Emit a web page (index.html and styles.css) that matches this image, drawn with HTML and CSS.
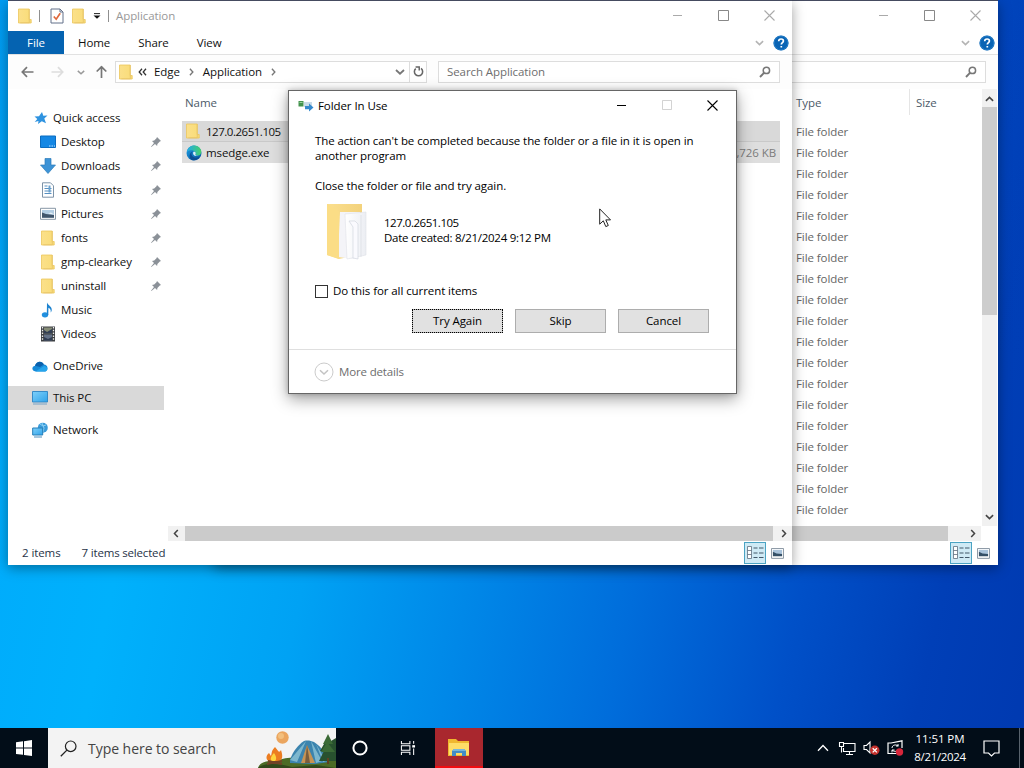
FILE: index.html
```html
<!DOCTYPE html>
<html lang="en">
<head>
<meta charset="utf-8">
<title>Application</title>
<link rel="stylesheet" href="styles.css">
</head>
<body>
<svg class="defs" aria-hidden="true">
  <defs>
    <linearGradient id="gFold" x1="0" x2="1"><stop offset="0" stop-color="#fbe08a"/><stop offset="1" stop-color="#f9dc78"/></linearGradient>
    <linearGradient id="gBack" x1="0" x2="1"><stop offset="0" stop-color="#fbdf8e"/><stop offset="1" stop-color="#f3d27c"/></linearGradient>
    <linearGradient id="gPage" x1="0" x2="1"><stop offset="0" stop-color="#fff"/><stop offset="1" stop-color="#eceef3"/></linearGradient>
    <linearGradient id="gScreen" x1="0" x2="1" y2="1"><stop offset="0" stop-color="#7fd0fa"/><stop offset="1" stop-color="#2fa3ea"/></linearGradient>
    <linearGradient id="gEdge" x1="0" x2="1" y2="1"><stop offset="0" stop-color="#1b9de2"/><stop offset="1" stop-color="#0b55a0"/></linearGradient>
    <linearGradient id="gEdge2" x1="0" x2="1"><stop offset="0" stop-color="#22a9e8"/><stop offset="1" stop-color="#45d06a"/></linearGradient>
  </defs>
  <symbol id="folder" viewBox="0 0 14 16"><path d="M.5 1h10.700v10.500h2V15H.5z" fill="url(#gFold)" stroke="#ecc75c" stroke-width=".8"/><path d="M11.300 1v13.800h-9" fill="none" stroke="#e6c469" stroke-width=".8"/></symbol>
  <symbol id="props" viewBox="0 0 14 16"><path d="M1 1h9l3 3v11H1z" fill="#fff" stroke="#62718a"/><path d="M10 1v3h3" fill="none" stroke="#62718a"/><path d="M3.800 8.500l2.400 2.700 4-6" fill="none" stroke="#e0683c" stroke-width="1.700"/></symbol>
  <symbol id="chev" viewBox="0 0 10 6"><path d="M1 1l4 3.700L9 1" fill="none" stroke="currentColor" stroke-width="1.800"/></symbol>
  <symbol id="chevR" viewBox="0 0 6 10"><path d="M1 1l3.700 4L1 9" fill="none" stroke="currentColor" stroke-width="1.700"/></symbol>
  <symbol id="arrow" viewBox="0 0 13 12"><path d="M12.500 6H1.500M6 1.200L1.300 6 6 10.800" fill="none" stroke="currentColor" stroke-width="1.700"/></symbol>
  <symbol id="mag" viewBox="0 0 12 12"><circle cx="7.400" cy="4.400" r="3.200" fill="none" stroke="currentColor" stroke-width="1.500"/><path d="M5 6.800L1 11" stroke="currentColor" stroke-width="1.900"/></symbol>
  <symbol id="help" viewBox="0 0 16 16"><circle cx="8" cy="8" r="7.600" fill="#0a64b4"/><circle cx="8" cy="8" r="6.900" fill="none" stroke="#2f86cf" stroke-width=".7"/><path d="M5.700 6.200C5.700 4.700 6.700 4 8.100 4c1.400 0 2.300.8 2.300 2 0 1.700-2.100 1.700-2.100 3.600M8.300 11v1.600" fill="none" stroke="#fff" stroke-width="1.700"/></symbol>
  <symbol id="min" viewBox="0 0 11 11"><path d="M1 5.500h9" stroke="currentColor"/></symbol>
  <symbol id="max" viewBox="0 0 11 11"><path d="M.5.500h10v10H.5z" fill="none" stroke="currentColor"/></symbol>
  <symbol id="close" viewBox="0 0 11 11"><path d="M.5.500l10 10M10.500.500l-10 10" stroke="currentColor" stroke-width="1.100"/></symbol>
  <symbol id="pin" viewBox="0 0 12 12"><path d="M7 1l4 4-1.200.5-2.400 2.400-.3 2.200L5 8l-3.600 3L1 10.700 4 7 2 5l2.200-.4L6.500 2.200z" fill="#8b9198"/></symbol>
  <symbol id="details" viewBox="0 0 17 14"><path d="M.5.500h4v12h-4zM.5 4.500h4M.5 8.500h4" fill="#fff" stroke="#5f6f7f" stroke-width=".8"/><path d="M6.500 2h4M12 2h4.500M6.500 7h4M12 7h4.500M6.500 11.500h4M12 11.500h4.500" stroke="#43586a" stroke-width="1.100"/></symbol>
  <symbol id="thumbs" viewBox="0 0 14 12"><path d="M.5.500h13v10.800H.5z" fill="#fff" stroke="#7f8d9b"/><path d="M2 2h10v4.500H2z" fill="#a9c3db"/><path d="M2 4l4 2 6 .5V9H2z" fill="#355067"/></symbol>
  <symbol id="pc" viewBox="0 0 16 15"><path d="M.5 1h15v10.500H.5z" fill="url(#gScreen)" stroke="#2b83c4" stroke-width=".9"/><path d="M1 13.500h14" stroke="#7ea7c6" stroke-width="1.100"/></symbol>
</svg>

<main class="desktop">
  <section class="window back">
    <div class="titlebar"><span class="caption-buttons"><svg><use href="#min"/></svg><svg class="dark"><use href="#max"/></svg><svg><use href="#close"/></svg></span></div>
    <div class="tabs"><span class="tab-end"><svg class="chev"><use href="#chev"/></svg><svg class="help"><use href="#help"/></svg></span></div>
    <div class="nav"><div class="search"><svg class="mag"><use href="#mag"/></svg></div></div>
    <div class="back-body">
      <div class="back-list">
        <div class="back-head"><span>Type</span><span>Size</span></div>
        <ul class="types">
          <li>File folder</li><li>File folder</li><li>File folder</li><li>File folder</li><li>File folder</li><li>File folder</li><li>File folder</li><li>File folder</li><li>File folder</li><li>File folder</li><li>File folder</li><li>File folder</li><li>File folder</li><li>File folder</li><li>File folder</li><li>File folder</li><li>File folder</li><li>File folder</li><li>File folder</li>
        </ul>
      </div>
      <div class="vscroll"><svg class="up"><use href="#chev"/></svg><i></i><svg><use href="#chev"/></svg></div>
    </div>
    <div class="hscroll"><i></i><svg><use href="#chevR"/></svg></div>
    <div class="status"><span class="views"><b><svg class="det"><use href="#details"/></svg></b><svg class="thu"><use href="#thumbs"/></svg></span></div>
  </section>

  <section class="window front">
    <div class="titlebar">
      <div class="quick">
        <svg class="fold"><use href="#folder"/></svg><i class="sep"></i>
        <svg class="fold pr"><use href="#props"/></svg><svg class="fold"><use href="#folder"/></svg>
        <svg class="more" viewBox="0 0 8 6"><path d="M1 .6h6" stroke="#222"/><path d="M.5 2.400h7L4 5.800z" fill="#111"/></svg><i class="sep two"></i>
        <span class="title">Application</span>
      </div>
      <span class="caption-buttons"><svg><use href="#min"/></svg><svg class="dark"><use href="#max"/></svg><svg><use href="#close"/></svg></span>
    </div>
    <div class="tabs"><span class="file">File</span><span class="tab home">Home</span><span class="tab share">Share</span><span class="tab view">View</span><span class="tab-end"><svg class="chev"><use href="#chev"/></svg><svg class="help"><use href="#help"/></svg></span></div>
    <div class="nav">
      <svg class="arr"><use href="#arrow"/></svg><svg class="arr fwd"><use href="#arrow"/></svg><svg class="hist"><use href="#chev"/></svg><svg class="arr upw"><use href="#arrow"/></svg>
      <div class="address">
        <svg class="fold"><use href="#folder"/></svg>
        <svg class="dbl" viewBox="0 0 9 8"><path d="M4 .8L1.200 4 4 7.200M8 .8L5.200 4 8 7.200" fill="none" stroke="#333" stroke-width="1.300"/></svg>
        <span class="edge">Edge</span><svg class="cr"><use href="#chevR"/></svg><span class="app">Application</span><svg class="cr"><use href="#chevR"/></svg>
        <svg class="drop"><use href="#chev"/></svg>
        <span class="refresh"><svg viewBox="0 0 12 12"><path d="M3 2.900A4.500 4.500 0 1 0 8.800 2.700" fill="none" stroke="#666" stroke-width="1.700"/><path d="M2.800 1h4v3.800" fill="none" stroke="#666" stroke-width="1.600"/></svg></span>
      </div>
      <div class="search"><span>Search Application</span><svg class="mag"><use href="#mag"/></svg></div>
    </div>
    <div class="body">
      <nav class="tree">
        <div class="item root"><svg viewBox="0 0 14 14"><path d="M8 1l1.300 3.800 4.200-.4-3.200 3 1.700 4.800-4.200-2L4 13l.5-3L.7 11l2.600-3L.5 5.500l4.500-.3z" fill="#2f93e0"/></svg><span class="w-qa">Quick access</span></div>
        <div class="item"><svg viewBox="0 0 16 14"><path d="M.5 1h15v11.500H.5z" fill="#1487e4" stroke="#0b6cc0"/><path d="M9 11h6" stroke="#bfe2ff" stroke-dasharray="1.500 1"/></svg><span>Desktop</span><svg class="pin"><use href="#pin"/></svg></div>
        <div class="item"><svg viewBox="0 0 16 16"><path d="M5 .5h6V7h4.500L8 15.500.5 7H5z" fill="#3d93d6" stroke="#2d7cba" stroke-width=".7"/></svg><span>Downloads</span><svg class="pin"><use href="#pin"/></svg></div>
        <div class="item"><svg viewBox="0 0 16 16"><path d="M2.500.8h8l3 3v11.400h-11z" fill="#fff" stroke="#7d93a8"/><path d="M4.500 4h3M4.500 6.500h7M4.500 9h7M4.500 11.500h7" stroke="#5790c2" stroke-width="1.200"/><path d="M8.500 3.500h2v7h-2z" fill="#6ba2cf"/></svg><span>Documents</span><svg class="pin"><use href="#pin"/></svg></div>
        <div class="item"><svg viewBox="0 0 16 13"><path d="M.5.800h15v11H.5z" fill="#fff" stroke="#8797a5"/><path d="M2 2.500h12v7.800H2z" fill="#b2cde3"/><path d="M2 5l4 1.500 8 1v2.800H2z" fill="#40556b"/><path d="M8 6l3-1 3 2z" fill="#e9f2f8"/></svg><span>Pictures</span><svg class="pin"><use href="#pin"/></svg></div>
        <div class="item"><svg><use href="#folder"/></svg><span>fonts</span><svg class="pin"><use href="#pin"/></svg></div>
        <div class="item"><svg><use href="#folder"/></svg><span>gmp-clearkey</span><svg class="pin"><use href="#pin"/></svg></div>
        <div class="item"><svg><use href="#folder"/></svg><span>uninstall</span><svg class="pin"><use href="#pin"/></svg></div>
        <div class="item"><svg viewBox="0 0 16 16"><ellipse cx="5" cy="12.800" rx="3.200" ry="2.600" fill="#2290df"/><path d="M7 .5c1 3 5.500 4 4.700 8-.1.800-.5 1.400-1 2 .5-3-1-4.300-2.300-4.800L8.300 13H6.800z" fill="#1d83d0"/></svg><span>Music</span></div>
        <div class="item"><svg viewBox="0 0 16 16"><path d="M1 .5h14v15H1z" fill="#3c3f43"/><path d="M4 1.500h8v6H4z" fill="#858b76"/><path d="M4 8.500h8v6H4z" fill="#647289"/><path d="M4 4l3 2 5-3v4.500H4zM4 11l4 2 4-2v3.500H4z" fill="#303d53"/><path d="M2.500 1v14M13.500 1v14" stroke="#eee" stroke-width="1.300" stroke-dasharray="1.500 1.300"/></svg><span>Videos</span></div>
        <div class="item root gap"><svg viewBox="0 0 16 14"><path d="M3.500 12.500C-.5 12-.6 7.500 3 6.800 4.500 2 10 1.300 11.800 5.600c4-.2 5.300 5.500 1.500 6.900z" fill="#168ad8"/><path d="M3 6.800C4.500 2 10 1.300 11.800 5.600L8 8z" fill="#0b61ad"/><path d="M3.500 12.500L12 7c4 .5 4.500 4.500 1.300 5.500z" fill="#26a5ec"/></svg><span>OneDrive</span></div>
        <div class="item root gap sel"><svg><use href="#pc"/></svg><span>This PC</span></div>
        <div class="item root gap"><svg viewBox="0 0 16 16"><circle cx="10.800" cy="5.700" r="5" fill="#3b9bd9"/><path d="M8 2l3 2 3-1M10 1l2 5-1 4" stroke="#8bd0f5" fill="none"/><path d="M.7 6h10v7h-10z" fill="url(#gScreen)" stroke="#267eb8"/><path d="M2 15h8" stroke="#6da2c9" stroke-width="1.200"/></svg><span>Network</span></div>
      </nav>
      <div class="pane">
        <div class="files">
          <div class="head">Name</div>
          <div class="row"><svg class="fi"><use href="#folder"/></svg><span class="ver">127.0.2651.105</span></div>
          <div class="row"><svg class="eg" viewBox="0 0 16 16"><circle cx="8" cy="8" r="7.500" fill="url(#gEdge)"/><path d="M.8 7C2 1.500 7-.8 11.500 1.300c4 2 5 6.700 2.300 8.700-1.700 1.100-4.500.7-4.300-1C10.500 6 4.800 3.200.8 7z" fill="url(#gEdge2)"/><path d="M6.800 6.200c-3 2.300-.7 7.300 4.700 6.300 1.200-.2 2-.8 2.400-1-1.700 3-5.200 4.300-8 3.500C2.500 13.500 3 7.500 6.800 6.200z" fill="#0c4d93"/><path d="M7.500 6.700c2.400-.5 2.500 1.800 1.900 2.700-.2 1.300 1.600 1.500 2.600 1.300-3 1.600-6-1.800-4.500-4z" fill="#dff1fa"/></svg><span>msedge.exe</span><span class="size">3,726 KB</span></div>
        </div>
        <div class="hscroll"><svg class="l"><use href="#chevR"/></svg><i></i><svg><use href="#chevR"/></svg></div>
      </div>
    </div>
    <div class="status"><span>2 items</span><span class="selcount">7 items selected</span><span class="views"><b><svg class="det"><use href="#details"/></svg></b><svg class="thu"><use href="#thumbs"/></svg></span></div>
  </section>

  <section class="dialog">
    <div class="dlg-title"><svg class="dicon" viewBox="0 0 16 12"><path d="M.5 1h5v5.500h-5z" fill="#43924d"/><path d="M1.500 2.500h3" stroke="#9bd09c"/><path d="M6 2h8v5H6z" fill="#c9dbe8"/><path d="M7 6h4V3.600L15.500 7.600 11 11.600V9.300H7z" fill="#3589cd"/></svg><span>Folder In Use</span><span class="dlg-caps"><svg class="k"><use href="#min"/></svg><svg class="dis"><use href="#max"/></svg><svg class="k x"><use href="#close"/></svg></span></div>
    <div class="dlg-body">
      <p class="msg">The action can't be completed because the folder or a file in it is open in<br>another program</p>
      <p class="msg second">Close the folder or file and try again.</p>
      <div class="what">
        <svg viewBox="0 0 46 58"><path d="M4 2h35v50L16 57 4 53z" fill="url(#gBack)"/><path d="M17 10h20v44l-7 3-15-2z" fill="#f4f4f8"/><path d="M22 12l21-2v43l-19 4z" fill="url(#gPage)" stroke="#dfe1e7" stroke-width=".6"/><path d="M26 19h6l3 3v35l-5-1V25z" fill="#fafafe" stroke="#d3d7df" stroke-width=".7"/><path d="M38 13v42" stroke="#d9dce3" stroke-width=".7"/><path d="M4 2l12 7v48L4 53z" fill="#fbdd86"/></svg>
        <div><p class="ver">127.0.2651.105</p><p class="date-line">Date created: 8/21/2024 9:12 PM</p></div>
      </div>
      <label class="check"><i></i><span>Do this for all current items</span></label>
      <div class="buttons"><button class="focus">Try Again</button><button>Skip</button><button>Cancel</button></div>
    </div>
    <div class="dlg-foot"><svg viewBox="0 0 20 20"><circle cx="10" cy="10" r="9" fill="#fff" stroke="#cbcbcb"/><path d="M6 8.300l4 3.700 4-3.700" fill="none" stroke="#c3c3c3" stroke-width="1.500"/></svg><span>More details</span></div>
  </section>

  <svg class="cursor" viewBox="0 0 12 20"><path d="M.7.900v15.300l3.600-3.400 2.500 5.800 2.500-1.100-2.500-5.600h4.700z" fill="#fff" stroke="#222" stroke-width="1"/></svg>

  <footer class="taskbar">
    <span class="start"><svg viewBox="0 0 16 16"><path d="M0 2.200l7-.9v6.300H0zM8 1.200L16 0v7.600H8zM0 8.600h7v6.200l-7-.9zM8 8.600h8V16l-8-1.100z" fill="#fff"/></svg></span>
    <div class="tb-search">
      <svg class="m" viewBox="0 0 17 17"><circle cx="10.700" cy="6.300" r="5.300" fill="none" stroke="#222" stroke-width="1.200"/><path d="M6.900 10.100L.8 16.200" stroke="#222" stroke-width="1.300"/></svg>
      <span>Type here to search</span>
      <svg class="art" viewBox="0 0 80 40"><circle cx="26.500" cy="9.500" r="6.200" fill="#eba55e"/><circle cx="25" cy="8" r="3" fill="#f3bf7d"/><path d="M2 40c2-7 12-8 20-7 8-5 28-4 38 0l20-1v8z" fill="#4b6b25"/><path d="M2 40c5-5 20-5 34-1l24-2 20 3z" fill="#31481b"/><path d="M34 32c3-9 8-15 14-19 4-1 7 0 10 1 8 5 11 11 15 20l-14 2-25-1z" fill="#3c84ae"/><path d="M50 13L34 32l7 2zM55 13l5 22 6-2zM60 16l10 17-3 1z" fill="#7db7ce"/><path d="M51 17l-6 18h14z" fill="#c69353"/><path d="M51 17l-2 18h5z" fill="#795d3d"/><path d="M72 9l-8 14h4l-5 10h17V10l-5 3z" fill="#28512f"/><path d="M72 6l-5 10h10zM71 14l-6 10h14z" fill="#3b6a36"/><path d="M72 30v6" stroke="#60401f" stroke-width="2"/><path d="M19 19c4 5 4 6 6 3 2 6 2 10-3 12h-8c-5-2-4-7-1-9l2 3c1-3 0-5 4-9z" fill="#ec7d20"/><path d="M18 25c3 4 3 8-1 9-4-2-2-6 1-9z" fill="#ffd43c"/><path d="M11 36l15-3M12 33l14 3" stroke="#704326" stroke-width="2"/></svg>
    </div>
    <span class="slot"><svg class="cort" viewBox="0 0 16 16"><circle cx="8" cy="8" r="6.600" fill="none" stroke="#fff" stroke-width="2"/></svg></span>
    <span class="slot task"><svg viewBox="0 0 17 16"><path d="M1.500.500v3h9v-3M1.500 15.500v-3h9v3M1.500 5.500h9v5h-9zM14.500.500v3M14.500 8.500v7" fill="none" stroke="#fff" stroke-width="1.100"/><path d="M13 5h3v2.500h-3z" fill="#fff"/></svg></span>
    <span class="exp"><svg viewBox="0 0 22 19"><path d="M0 1h8l2 2h11v15H0z" fill="#f0b72f"/><path d="M1 5h20v12H1z" fill="#ffdc67"/><path d="M4 18v-5l2-2h10l2 2v5h-4v-3H8v3z" fill="#438dc6"/><path d="M6 11h10l2 2H4z" fill="#76b6dc"/></svg></span>
    <div class="tray">
      <svg class="t1" viewBox="0 0 12 8"><path d="M1 6.800L6 1.500l5 5.300" fill="none" stroke="#fff" stroke-width="1.300"/></svg>
      <svg class="t2" viewBox="0 0 17 15"><path d="M5 2.500h11v8H4.500V7M10.500 10.500v3M7 13.500h7M.5 1.500h4v4h-4zM2.500 5.500v6" fill="none" stroke="#fff" stroke-width="1.100"/></svg>
      <svg class="t3" viewBox="0 0 17 16"><path d="M1 5.500h2.500L7 2v11L3.500 9.500H1z" fill="none" stroke="#fff" stroke-width="1.100"/><circle cx="11.800" cy="10.300" r="4.700" fill="#c5312d"/><path d="M9.700 8.200l4.200 4.200M13.900 8.200l-4.200 4.200" stroke="#fff" stroke-width="1.300"/></svg>
      <svg class="t4" viewBox="0 0 17 16"><path d="M15 8V.800L4 3H1v10.500h9" fill="none" stroke="#fff" stroke-width="1.200"/><path d="M5 8c0-3 4-4 6-2V4M11.500 6H9M11 9c0 3-4 3-6 1v2.500M5 10h2.500" fill="none" stroke="#fff"/><circle cx="12.500" cy="12" r="3.700" fill="#d7263b"/></svg>
      <div class="clock"><span>11:51 PM</span><span class="date">8/21/2024</span></div>
      <svg class="t5" viewBox="0 0 17 17"><path d="M1 1h15v12h-4.500l-3 3-3-3H1z" fill="none" stroke="#fff" stroke-width="1.200"/></svg>
      <i class="peek"></i>
    </div>
  </footer>
</main>
</body>
</html>
```
FILE: styles.css
```css
* { box-sizing: border-box; }
body { margin: 0; width: 1024px; height: 768px; overflow: hidden; font-family: "Open Sans", "Noto Sans", sans-serif; font-size: 11.5px; letter-spacing: -.08px; color: #111; }
p, ul { margin: 0; padding: 0; }
li { list-style: none; }
svg { display: block; flex: none; overflow: visible; }
span { white-space: nowrap; }
.defs { position: absolute; width: 0; height: 0; }

.desktop {
  position: relative; width: 1024px; height: 768px; overflow: hidden;
  background:
    linear-gradient(180deg, rgba(0, 50, 170, .1), transparent 50%),
    linear-gradient(102deg, #00a8fb 0%, #00b1fc 20%, #00a2f4 36%, #0088e8 50%, #006ddb 64%, #0050c8 78%, #003fb7 90%, #0039b0 100%);
}

.window { position: absolute; top: 1px; width: 784px; height: 564px; background: #fff; display: flex; flex-direction: column; box-shadow: 0 -1px 0 #454b60, 0 3px 12px rgba(0, 0, 0, .38); }
.front { left: 8px; }
.back { left: 214px; }

.titlebar { height: 30px; display: flex; align-items: center; padding-bottom: 1px; }
.quick { display: flex; align-items: center; padding-left: 10px; }
.fold { width: 14px; height: 16px; }
.sep { width: 1px; height: 12px; background: #8f8f8f; margin: 0 10px 0 7px; }
.pr { margin-right: 8px; }
.more { width: 8px; height: 6px; margin-left: 7px; }
.sep.two { margin: 0 7px 0 7px; }
.title { color: #999; }
.caption-buttons { margin-left: auto; display: flex; gap: 35px; padding-right: 17px; color: #aaa; }
.caption-buttons svg { width: 11px; height: 11px; }
.caption-buttons .dark { color: #888; }

.tabs { height: 24px; display: flex; align-items: center; border-bottom: 1px solid #e2e2e2; }
.file { width: 56px; height: 23px; background: #0563b1; color: #fff; text-align: center; line-height: 24px; }
.tab { line-height: 24px; }
.home { margin-left: 14px; }
.share { margin-left: 28px; }
.view { margin-left: 28px; }
.tab-end { margin-left: auto; display: flex; align-items: center; gap: 9px; padding-right: 3px; }
.tab-end .chev { width: 9px; height: 6px; color: #b4b4b4; }
.tab-end .help { width: 16px; height: 16px; }

.nav { height: 34px; display: flex; align-items: center; background: #fdfdfd; padding-right: 12px; }
.arr { width: 13px; height: 12px; margin-left: 13px; color: #777; }
.arr.fwd { transform: scaleX(-1); color: #ddd; margin-left: 17px; }
.hist { width: 8px; height: 5px; color: #999; margin-left: 13px; }
.arr.upw { transform: rotate(90deg); margin-left: 10px; }
.address { width: 312px; height: 22px; margin-left: 7px; border: 1px solid #ddd; background: #fff; display: flex; align-items: center; padding-left: 3px; }
.address span, .search span { line-height: 18px; padding-bottom: 1px; }
.dbl { width: 9px; height: 8px; margin: 0 7px 0 5px; }
.cr { width: 5px; height: 8px; color: #777; margin: 0 9px 0 9px; }
.drop { width: 10px; height: 6px; color: #777; margin-left: auto; }
.refresh { border-left: 1px solid #ddd; height: 20px; margin-left: 4px; width: 17px; display: flex; align-items: center; justify-content: center; }
.refresh svg { width: 11px; height: 11px; }
.search { width: 342px; height: 22px; margin-left: auto; border: 1px solid #ddd; background: #fff; display: flex; align-items: center; padding: 0 8px; color: #6e6e6e; }
.mag { width: 12px; height: 12px; margin-left: auto; color: #777; }

.body { height: 453px; display: flex; }
.tree { width: 160px; padding-top: 17px; }
.item { height: 24px; display: flex; align-items: center; padding: 0 0 0 32px; width: 156px; }
.item svg { width: 16px; height: 16px; margin-right: 5px; }
.item span { padding-bottom: 2px; }
.item .pin { width: 12px; height: 12px; margin: 0 2px 0 auto; }
.item.root { padding-left: 24px; }
.item.root:first-child svg { width: 14px; height: 14px; margin: 0 5px 0 2px; }
.item.gap { margin-top: 8px; }
.item.sel { background: linear-gradient(#d9d9d9, #d9d9d9) 0 0 / 100% 24px; margin-top: 8px; }

.pane { flex: 1; display: flex; flex-direction: column; }
.files { flex: 1; padding: 0 12px 0 14px; }
.head { height: 32px; line-height: 28px; padding-left: 3px; color: #4c5a68; }
.row { height: 21px; display: flex; align-items: center; background: #d9d9d9; padding: 0 4px; border-bottom: 1px solid #c9c9c9; }
.row + .row { background: #dedede; border-bottom: 0; }
.ver { letter-spacing: -.48px; }
.fi { width: 14px; height: 16px; margin-right: 6px; }
.eg { width: 16px; height: 16px; margin-right: 4px; }
.size { margin-left: auto; color: #7c7c7c; }

.hscroll { height: 15px; display: flex; align-items: center; background: #f1f1f1; color: #444; margin-bottom: 1px; flex: none; }
.hscroll i { height: 15px; background: #cbcbcb; flex: 1; margin: 0 8px; }
.hscroll svg { width: 6px; height: 9px; margin-right: 5px; }
.hscroll svg.l { transform: scaleX(-1); margin: 0 0 0 5px; }
.front .hscroll i { margin: 0 8px 0 6px; }

.status { height: 22px; display: flex; align-items: center; padding-left: 14px; color: #1f3347; line-height: 18px; }
.selcount { margin-left: 21px; letter-spacing: -.18px; }
.views { margin-left: auto; display: flex; align-items: center; gap: 5px; padding-right: 8px; }
.views b { width: 22px; height: 22px; background: #cfeaf5; border: 1px solid #4ba3c3; display: flex; align-items: center; justify-content: center; }
.det { width: 17px; height: 14px; }
.thu { width: 13px; height: 11px; }

.back .nav .search { width: 552px; }
.back-body { display: flex; height: 437px; flex: none; }
.back-list { flex: 1; padding-left: 582px; color: #666; }
.back-head { height: 32px; line-height: 28px; display: flex; color: #4c5a68; }
.back-head span:first-child { width: 114px; height: 26px; border-right: 1px solid #e5e5e5; }
.back-head span:last-child { padding-left: 6px; }
.types li { height: 21px; line-height: 21px; }
.vscroll { width: 16px; background: #f1f1f1; display: flex; flex-direction: column; align-items: center; padding: 7px 0 6px; color: #444; border-right: 1px solid #fff; }
.vscroll svg { width: 9px; height: 6px; margin-top: auto; }
.vscroll .up { transform: scaleY(-1); margin: 0; }
.vscroll i { width: 15px; height: 208px; background: #cdcdcd; margin-top: 5px; }
.back .hscroll { margin-right: 17px; }
.back .hscroll i { margin-right: 22px; }

.dialog { position: absolute; left: 288px; top: 90px; width: 449px; height: 304px; background: #fff; border: 1px solid #666; box-shadow: 0 5px 15px rgba(0, 0, 0, .38), 0 0 5px rgba(0, 0, 0, .2); color: #000; }
.dlg-title { height: 29px; display: flex; align-items: center; padding-left: 9px; }
.dicon { width: 16px; height: 12px; margin-right: 4px; }
.dlg-caps { margin-left: auto; display: flex; gap: 35px; padding-right: 18px; }
.dlg-caps svg { width: 10px; height: 10px; }
.dlg-caps .k:first-child { width: 11px; height: 11px; }
.dlg-caps .dis { color: #ccc; }
.dlg-caps .x { width: 11px; height: 11px; }
.dlg-body { height: 229px; padding: 13px 26px 0; }
.msg { line-height: 15px; white-space: nowrap; }
.msg.second { margin-top: 15px; }
.what { display: flex; margin-top: 8px; line-height: 15px; height: 62px; }
.what svg { width: 46px; height: 58px; margin: 1px 15px 0 8px; }
.what div { padding-top: 14px; }
.date-line { letter-spacing: -.28px; }
.check { display: flex; align-items: center; height: 16px; margin-top: 20px; }
.check span { padding-bottom: 1px; }
.check i { width: 13px; height: 13px; border: 1px solid #333; margin-right: 5px; }
.buttons { display: flex; justify-content: flex-end; gap: 12px; margin-top: 10px; padding-right: 1px; }
button { width: 91px; height: 24px; background: #e1e1e1; border: 1px solid #adadad; font: inherit; letter-spacing: inherit; padding: 0 0 1px; color: #000; }
button.focus { outline: 1px dotted #000; outline-offset: -1px; }
.dlg-foot { height: 44px; border-top: 1px solid #dfdfdf; display: flex; align-items: center; padding-left: 25px; color: #6d6d6d; letter-spacing: -.15px; }
.dlg-foot svg { width: 20px; height: 20px; margin-right: 5px; }

.cursor { position: absolute; left: 599px; top: 208px; width: 12px; height: 20px; }

.taskbar { position: absolute; left: 0; top: 728px; width: 1024px; height: 40px; background: #020d18; display: flex; align-items: center; color: #fff; }
.start { width: 48px; display: flex; justify-content: center; }
.start svg { width: 16px; height: 16px; }
.tb-search { width: 288px; height: 40px; background: #f3f3f3; display: flex; align-items: center; padding-left: 12px; color: #444; font-size: 14px; letter-spacing: -.04px; overflow: hidden; }
.tb-search .m { width: 17px; height: 17px; margin-right: 11px; }
.tb-search .art { width: 80px; height: 40px; margin-left: auto; }
.slot { width: 48px; display: flex; justify-content: center; }
.slot svg { width: 16px; height: 16px; }
.exp { width: 48px; height: 40px; margin-left: 3px; background: #a9272e; border-bottom: 2px solid #f00d12; display: flex; align-items: center; justify-content: center; }
.exp svg { width: 22px; height: 19px; }
.tray { margin-left: auto; height: 40px; display: flex; align-items: center; }
.t1 { width: 12px; height: 8px; }
.t2 { width: 17px; height: 15px; margin-left: 10px; }
.t3 { width: 17px; height: 16px; margin-left: 7px; }
.t4 { width: 17px; height: 16px; margin-left: 7px; }
.clock { width: 60px; margin-left: 6px; display: flex; flex-direction: column; align-items: center; line-height: 18px; }
.date { letter-spacing: -.35px; }
.t5 { width: 17px; height: 17px; margin-left: 13px; }
.peek { width: 1px; height: 40px; background: #59636d; margin: 0 4px 0 19px; }
```
